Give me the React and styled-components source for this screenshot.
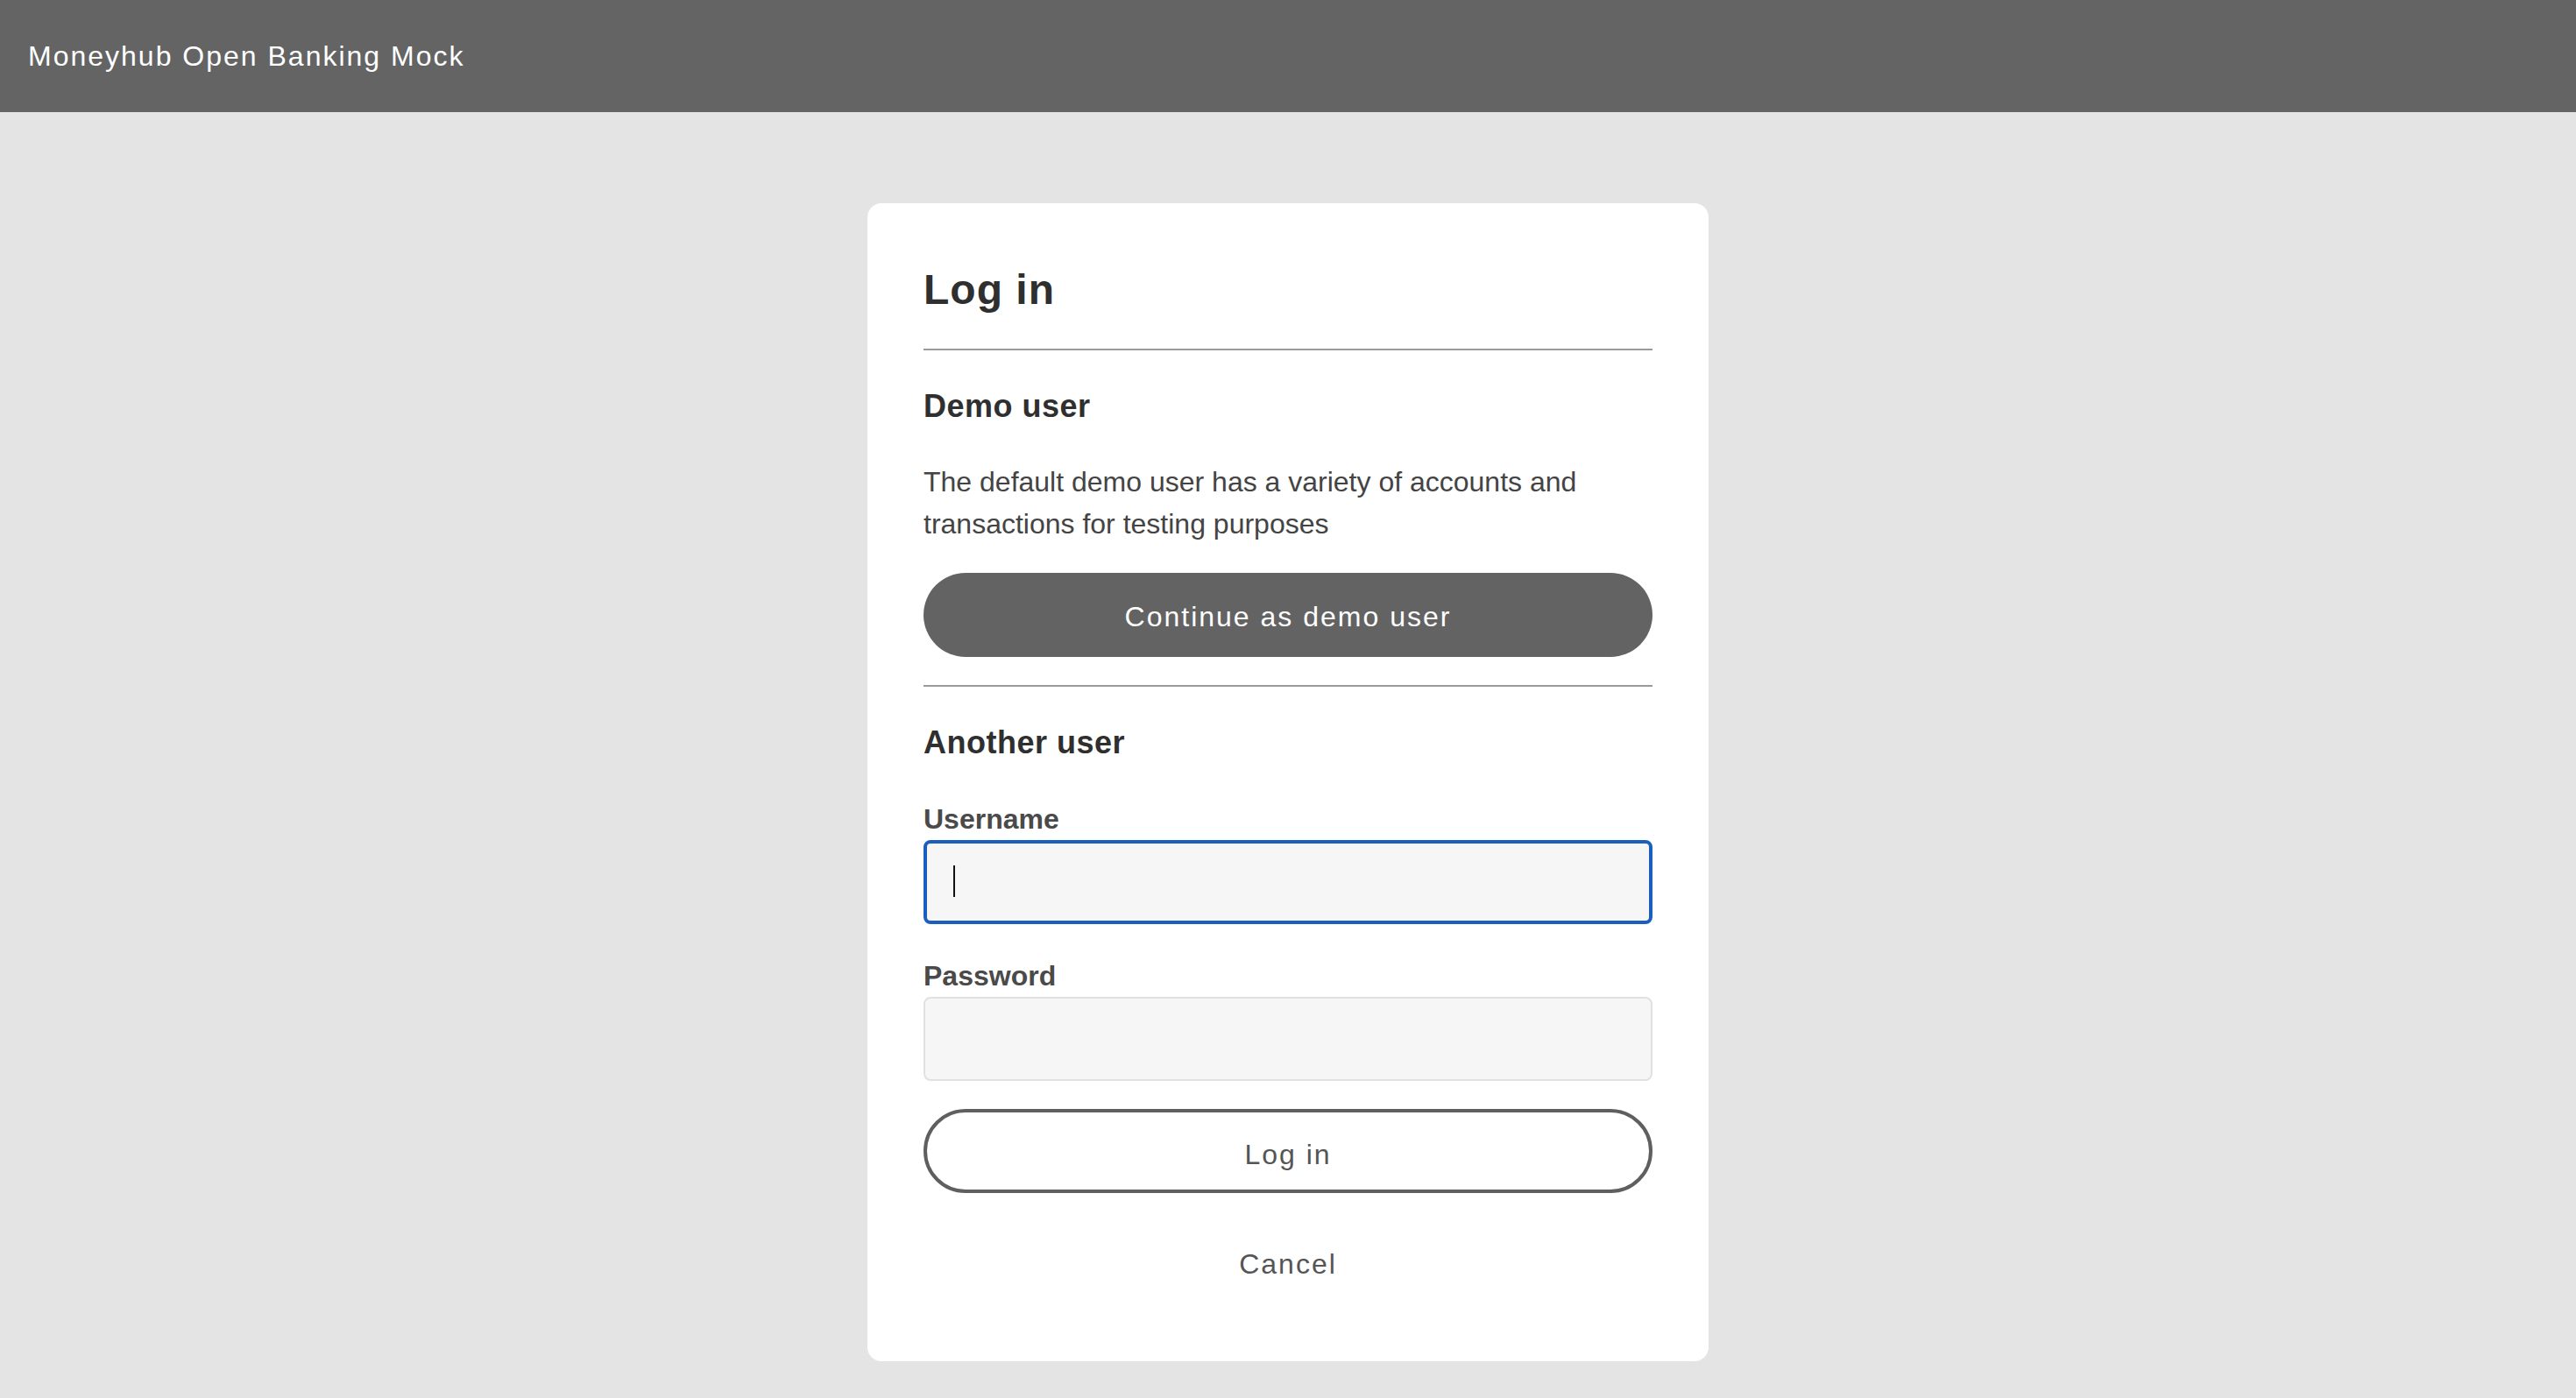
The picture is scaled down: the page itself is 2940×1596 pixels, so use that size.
import React from "react";
import styled, { createGlobalStyle } from "styled-components";

const GlobalStyle = createGlobalStyle`
  html, body {
    margin: 0;
    padding: 0;
    background: #e4e4e4;
    font-family: "Liberation Sans", Arial, Helvetica, sans-serif;
    color: #333;
  }
  * {
    box-sizing: border-box;
  }
`;

const Page = styled.div`
  min-height: 1596px;
  background: #e4e4e4;
`;

const TopBar = styled.header`
  height: 128px;
  background: #646464;
  display: flex;
  align-items: center;
  padding: 0 32px;
`;

const Brand = styled.span`
  color: #fff;
  font-size: 32px;
  letter-spacing: 2px;
`;

const Card = styled.main`
  width: 960px;
  margin: 104px auto 0;
  padding: 64px 64px 64px;
  background: #fff;
  border-radius: 16px;
  display: flex;
  flex-direction: column;
`;

const Title = styled.h1`
  margin: 0;
  font-size: 48px;
  line-height: 70px;
  font-weight: 700;
  color: #2f2f2f;
  letter-spacing: 1px;
`;

const Divider = styled.hr`
  margin: ${(p) => p.$top}px 0 0;
  border: 0;
  border-top: 2px solid #9a9a9a;
  height: 0;
`;

const Section = styled.h2`
  margin: 42px 0 0;
  font-size: 36px;
  line-height: 44px;
  font-weight: 700;
  color: #2f2f2f;
  letter-spacing: 0.5px;
`;

const Intro = styled.p`
  margin: 40px 0 0;
  font-size: 32px;
  line-height: 48px;
  color: #444;
`;

const PillButton = styled.button`
  margin-top: ${(p) => p.$top}px;
  width: 100%;
  height: 96px;
  border-radius: 48px;
  font-family: inherit;
  font-size: 32px;
  letter-spacing: 2px;
  padding: ${(p) => (p.$solid ? 5 : 9)}px 0 0;
  cursor: pointer;
  background: ${(p) => (p.$solid ? "#636363" : "#fff")};
  color: ${(p) => (p.$solid ? "#fff" : "#555")};
  border: ${(p) => (p.$solid ? "0" : "4px solid #5f5f5f")};
`;

const TextButton = styled.button`
  margin-top: 32px;
  height: 96px;
  width: 100%;
  background: none;
  border: 0;
  font-family: inherit;
  font-size: 32px;
  letter-spacing: 2px;
  color: #555;
  padding: 3px 0 0;
  cursor: pointer;
`;

const Label = styled.label`
  display: block;
  margin-top: ${(p) => p.$top}px;
  font-size: 32px;
  line-height: 48px;
  font-weight: 700;
  color: #4a4a4a;
`;

const FieldWrap = styled.div`
  position: relative;
`;

const Field = styled.input`
  display: block;
  width: 100%;
  height: 96px;
  margin: 0;
  font-family: inherit;
  font-size: 32px;
  color: #222;
  caret-color: #000;
  background: #f6f6f6;
  border-radius: 8px;
  outline: none;
  border: ${(p) => (p.$active ? "4px solid #1a5fbe" : "2px solid #e1e1e1")};
  padding: 0 30px 0 ${(p) => (p.$active ? 30 : 32)}px;
`;

const Caret = styled.span`
  position: absolute;
  left: 34px;
  top: 29px;
  width: 2px;
  height: 36px;
  background: #111;
  pointer-events: none;
`;

export default function App() {
  return (
    <Page>
      <GlobalStyle />
      <TopBar>
        <Brand>Moneyhub Open Banking Mock</Brand>
      </TopBar>
      <Card>
        <Title>Log in</Title>
        <Divider $top={32} />
        <Section>Demo user</Section>
        <Intro>
          The default demo user has a variety of accounts and transactions for
          testing purposes
        </Intro>
        <PillButton $solid $top={32}>
          Continue as demo user
        </PillButton>
        <Divider $top={32} />
        <Section>Another user</Section>
        <Label $top={41} htmlFor="username">
          Username
        </Label>
        <FieldWrap>
          <Field id="username" type="text" $active />
          <Caret />
        </FieldWrap>
        <Label $top={35} htmlFor="password">
          Password
        </Label>
        <Field id="password" type="password" />
        <PillButton $top={32}>Log in</PillButton>
        <TextButton>Cancel</TextButton>
      </Card>
    </Page>
  );
}
